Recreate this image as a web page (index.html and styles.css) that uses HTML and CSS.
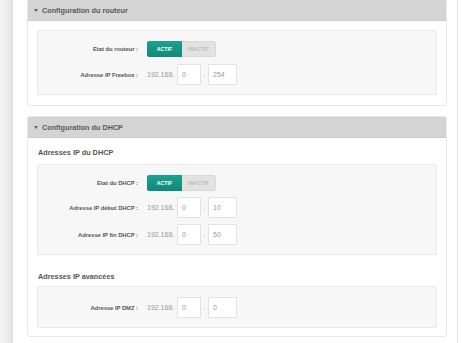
FILE: index.html
```html
<!DOCTYPE html>
<html lang="fr">
<head>
<meta charset="utf-8">
<link rel="stylesheet" href="styles.css">
</head>
<body>
<div class="page">
  <div class="sidebar"></div>
  <div class="main">
    <section class="panel panel-first">
      <div class="panel-head"><span class="caret"></span>Configuration du routeur</div>
      <div class="panel-body">
        <div class="box box-wide">
          <div class="row">
            <span class="label">Etat du routeur :</span>
            <div class="toggle"><span class="on">ACTIF</span><span class="off">INACTIF</span></div>
          </div>
          <div class="row">
            <span class="label">Adresse IP Freebox :</span>
            <div class="ip"><span class="prefix">192.168.</span><span class="field f1">0</span><span class="dot">.</span><span class="field f2">254</span></div>
          </div>
        </div>
      </div>
    </section>
    <section class="panel">
      <div class="panel-head"><span class="caret"></span>Configuration du DHCP</div>
      <div class="panel-body">
        <h3 class="sub">Adresses IP du DHCP</h3>
        <div class="box">
          <div class="row">
            <span class="label">Etat du DHCP :</span>
            <div class="toggle"><span class="on">ACTIF</span><span class="off">INACTIF</span></div>
          </div>
          <div class="row">
            <span class="label">Adresse IP début DHCP :</span>
            <div class="ip"><span class="prefix">192.168.</span><span class="field f1">0</span><span class="dot">.</span><span class="field f2">10</span></div>
          </div>
          <div class="row">
            <span class="label">Adresse IP fin DHCP :</span>
            <div class="ip"><span class="prefix">192.168.</span><span class="field f1">0</span><span class="dot">.</span><span class="field f2">50</span></div>
          </div>
        </div>
        <h3 class="sub sub2">Adresses IP avancées</h3>
        <div class="box">
          <div class="row">
            <span class="label">Adresse IP DMZ :</span>
            <div class="ip"><span class="prefix">192.168.</span><span class="field f1">0</span><span class="dot">.</span><span class="field f2">0</span></div>
          </div>
        </div>
      </div>
    </section>
  </div>
  <div class="rightbar"></div>
</div>
</body>
</html>
```
FILE: styles.css
```css
* { box-sizing: border-box; }
html, body { margin: 0; padding: 0; background: #fff; }
body { font-family: "Liberation Sans", Arial, sans-serif; color: #555; }
.page { display: flex; width: 462px; height: 343px; overflow: hidden; }
.sidebar {
  width: 13px; flex: none;
  background: linear-gradient(to right, #f3f3f3, #eaeaea 80%, #e0e0e0);
  border-right: 1px solid #e4e4e4;
}
.main { width: 434px; flex: none; padding: 0 0 0 14px; }
.rightbar { width: 15px; flex: none; border-left: 1px solid #e6e6e6; margin-left: 10px; }
.panel {
  width: 420px;
  border: 1px solid #e8e8e8;
  border-radius: 3px;
  background: #fff;
  margin-top: 10px;
}
.panel-first { margin-top: -1px; }
.panel-head {
  height: 21px;
  background: #d4d4d4;
  border-bottom: 1px solid #cdcdcd;
  display: flex; align-items: center;
  padding-left: 6px;
  font-size: 7.25px;
  color: #5a5a5a;
  font-weight: bold;
}
.caret {
  width: 0; height: 0;
  border-left: 2px solid transparent;
  border-right: 2px solid transparent;
  border-top: 3px solid #666;
  margin-right: 4px;
}
.panel-body { padding: 9px 9px 8px 9px; }
.panel-first .panel-body { padding-top: 9px; padding-bottom: 10px; }
.box {
  background: #f7f7f7;
  border: 1px solid #eaeaea;
  border-radius: 2px;
  padding: 10px 0 9px 0;
  display: flex; flex-direction: column; gap: 6px;
}
.box-wide { gap: 7px; }
.row { display: flex; align-items: center; }
.label {
  width: 100px; text-align: right;
  font-size: 5.8px; font-weight: bold; color: #555;
  margin-right: 9px;
}
.toggle { display: flex; height: 16px; border-radius: 2px; overflow: hidden; }
.toggle span {
  display: flex; align-items: center; justify-content: center;
  font-size: 5.2px; font-weight: bold;
}
.toggle .on { width: 35px; background: linear-gradient(#1aa390, #118877); color: #fff; }
.toggle .off { width: 34px; background: #e2e2e2; color: #bdbdbd; border: 1px solid #d8d8d8; border-left: none; border-radius: 0 2px 2px 0; }
.ip { display: flex; align-items: center; font-size: 7px; color: #999; }
.prefix { width: 30px; }
.field {
  height: 21px; background: #fff; border: 1px solid #e2e2e2; border-radius: 1px;
  display: flex; align-items: center; padding-left: 4px;
  font-size: 7px; color: #999;
}
.f1 { width: 24px; }
.dot { width: 7px; text-align: center; }
.f2 { width: 29px; }
.sub {
  margin: 0 0 5px 1px;
  font-size: 7.3px; font-weight: bold; color: #555;
  height: 12px; line-height: 12px;
}
.sub2 { margin-top: 16px; margin-bottom: 3px; }
```
